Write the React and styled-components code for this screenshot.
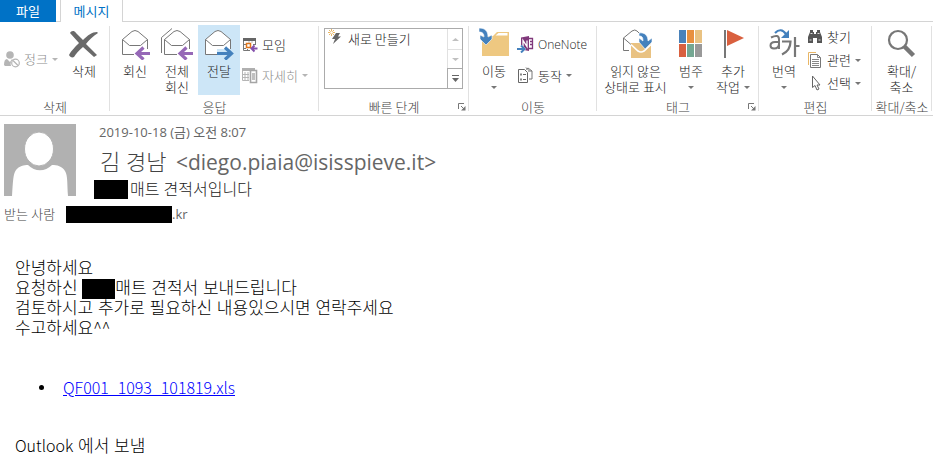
import React, { useState } from 'react';
import styled, { createGlobalStyle } from 'styled-components';

const GlobalStyle = createGlobalStyle`
  * {
    box-sizing: border-box;
  }
  body {
    margin: 0;
    background: #fff;
    font-family: 'Open Sans', 'Noto Sans CJK KR', sans-serif;
    font-size: 13px;
    color: #444;
  }
  button {
    font: inherit;
    color: inherit;
    background: none;
    border: none;
    padding: 0;
    cursor: pointer;
  }
`;

const TabBar = styled.nav`
  display: flex;
  height: 22px;
  margin-right: 5px;
`;

const FileTab = styled.button`
  && {
    width: 56px;
    background: #0072c6;
    color: #fff;
    line-height: 20px;
  }
`;

const TabGap = styled.span`
  width: 4px;
  border-bottom: 1px solid #d4d4d4;
`;

const TabFill = styled.span`
  flex: 1;
  border-bottom: 1px solid #d4d4d4;
`;

const MessageTab = styled.button`
  && {
    width: 63px;
    color: #0072c6;
    line-height: 20px;
    border: solid #d4d4d4;
    border-width: 0 1px;
  }
`;

const RibbonBar = styled.div`
  margin-right: 5px;
  border-bottom: 1px solid #d4d4d4;
  display: flex;
  font-family: 'Noto Sans CJK KR', sans-serif;
  font-weight: 300;
  color: #222;
`;

const Group = styled.section`
  flex: none;
  width: ${({ $width }) => $width}px;
  display: flex;
  flex-direction: column;
  padding-top: 3px;
  background: linear-gradient(#e1e1e1, #e1e1e1) right 0 top 4px / 1px calc(100% - 8px) no-repeat;
`;

const GroupItems = styled.div`
  flex: 1;
  display: flex;
  min-height: 70px;
  padding: 0 4px;
`;

const GroupFooter = styled.div`
  display: grid;
  grid-template-columns: ${({ $launcher }) => ($launcher ? '10px 1fr 10px' : '1fr')};
  align-items: center;
  padding: 4px 3px 0 3px;
  line-height: 16px;
  color: #444;
  white-space: nowrap;
`;

const GroupName = styled.span`
  grid-column: ${({ $launcher }) => ($launcher ? 2 : 1)};
  display: flex;
  justify-content: center;
`;

const BigButton = styled.button`
  width: ${({ $width }) => $width || 42}px;
  display: flex;
  flex-direction: column;
  align-items: center;
  gap: 3px;
  && {
    padding-top: 3px;
    background: ${({ $active }) => ($active ? '#cde6f7' : 'transparent')};
  }
  &&:hover {
    background: #cde6f7;
  }
`;

const BigLabel = styled.span`
  display: flex;
  flex-direction: column;
  align-items: center;
  line-height: 16px;
  white-space: nowrap;
`;

const LabelLine = styled.span`
  display: flex;
  align-items: center;
  justify-content: center;
  gap: 4px;
  min-height: 16px;
`;

const Caret = styled.span`
  border: solid transparent;
  border-width: 3px 3px 0;
  border-top-color: ${({ $dim }) => ($dim ? '#b5b5b5' : '#777')};
`;

const SmallColumn = styled.div`
  display: flex;
  flex-direction: column;
  align-items: flex-start;
  gap: ${({ $gap }) => $gap}px;
  padding: ${({ $top }) => $top}px 0 0 2px;
`;

const SmallButton = styled.button`
  display: flex;
  align-items: center;
  gap: 4px;
  line-height: 16px;
  white-space: nowrap;
  && {
    color: ${({ disabled }) => (disabled ? '#8c8c8c' : '#222')};
  }
`;

const JunkArea = styled.div`
  display: flex;
  align-items: center;
  width: 62px;
  padding-bottom: 2px;
`;

const Latin = styled.span`
  font-family: 'Open Sans', sans-serif;
  font-size: 12px;
`;

const Gallery = styled.div`
  flex: 1;
  display: grid;
  grid-template-columns: 1fr 15px;
  height: 61px;
  margin: 3px 2px 0 1px;
  border: 1px solid #ababab;
`;

const GalleryItem = styled.button`
  display: flex;
  align-self: start;
  align-items: center;
  gap: 6px;
  line-height: 20px;
  && {
    padding-left: 1px;
  }
`;

const GalleryScroll = styled.div`
  display: grid;
  grid-template-rows: 20px 19px 20px;
`;

const ScrollButton = styled.button`
  && {
    display: grid;
    place-items: center;
    border: solid ${({ $more }) => ($more ? '#ababab' : '#e1e1e1')};
    border-width: ${({ $first }) => ($first ? '0' : '1px')} 0 0 1px;
  }
`;

const Launcher = styled.button`
  grid-column: 3;
  display: flex;
  justify-content: flex-end;
`;

const Header = styled.header`
  padding: 8px 4px 0;
`;

const HeaderTop = styled.div`
  display: flex;
  gap: 18px;
`;

const Details = styled.div`
  flex: 1;
  display: flex;
  flex-direction: column;
`;

const Sent = styled.time`
  padding-left: 5px;
  line-height: 16px;
  color: #666;
`;

const Sender = styled.div`
  padding: 6px 0 2px 6px;
  line-height: 30px;
  font-size: 21px;
  color: #666;
`;

const SenderName = styled.span`
  margin-right: 4px;
  font-size: 22px;
  font-weight: 300;
  color: #444;
`;

const Subject = styled.h1`
  display: flex;
  align-items: center;
  gap: 2px;
  margin: 0;
  font-size: 16px;
  font-weight: 300;
  line-height: 20px;
  color: #222;
`;

const Recipient = styled.div`
  display: flex;
  align-items: center;
  margin-top: 5px;
  line-height: 20px;
  color: #666;
`;

const RecipientLabel = styled.span`
  width: 62px;
  font-weight: 300;
  color: #444;
`;

const Redacted = styled.span`
  display: inline-block;
  width: ${({ $width }) => $width}px;
  height: ${({ $height }) => $height}px;
  background: #000;
  vertical-align: top;
`;

const Body = styled.main`
  padding: 35px 15px 0;
  font-family: 'Liberation Sans', 'Noto Sans CJK KR', sans-serif;
  font-size: 17px;
  font-weight: 300;
  line-height: 20px;
  color: #000;
`;

const Line = styled.p`
  margin: 0;
`;

const Thin = styled.span`
  font-family: 'Noto Sans CJK KR', sans-serif;
  font-size: 16px;
  line-height: 1;
`;

const Attachments = styled.ul`
  list-style: none;
  margin: 38px 0 40px;
  padding: 0 0 0 24px;
`;

const Attachment = styled.li`
  display: flex;
  align-items: center;
  gap: 19px;
  &::before {
    content: '';
    width: 5px;
    height: 5px;
    border-radius: 50%;
    background: #000;
  }
`;

const FileLink = styled.a`
  font-family: 'Noto Sans CJK KR', sans-serif;
  font-size: 16px;
  color: #00f;
`;

const JunkIcon = () => (
  <svg width="16" height="17" viewBox="0 0 16 17">
    <circle cx="6" cy="4" r="3.8" fill="#b5b5b5" />
    <path d="M0 14c0-4 1-6 3-6l3 3 2-3 1 1c-2 1-3 3-2 6H1z" fill="#b5b5b5" />
    <circle cx="11.5" cy="12" r="3.8" fill="#fff" stroke="#b5b5b5" strokeWidth="1.2" />
    <path d="M9 9.500l5 5" stroke="#b5b5b5" strokeWidth="1.200" />
  </svg>
);

const DeleteIcon = () => (
  <svg width="32" height="32" viewBox="0 0 32 32">
    <path d="M2 5C3 3 6 2 8 5L15 12C20 7 24 4 29 4L30 5C25 8 21 12 18 16L29 27 26 29 15 19C11 22 8 26 6 29 4 30 2 29 1 27 3 23 8 18 11 15Z" fill="#6a6a6a" />
  </svg>
);

const Envelope = ({ x = 0 }) => (
  <g transform={`translate(${x} 0)`} fill="#fff" stroke="#777" strokeWidth="1">
    <path d="M1.500 11.500 11 3.500q3-2 6 0L26.500 11.500V26.500H1.500z" />
    <path d="M1.500 11.500 8.500 17.500H19.500L26.500 11.500" fill="none" />
  </g>
);

const ReplyIcon = () => (
  <svg width="32" height="32" viewBox="0 0 32 32">
    <Envelope x={2} />
    <path d="M15 21h17v8H15z" fill="#fff" />
    <path d="M31 25.500H18M24.500 19.500l-6.500 6 6.500 6" fill="none" stroke="#9668b7" strokeWidth="3.200" />
  </svg>
);

const ReplyAllIcon = () => (
  <svg width="34" height="32" viewBox="0 0 34 32">
    <path d="M1.500 25V9.500L12 .5" fill="none" stroke="#777" />
    <Envelope x={3} />
    <path d="M17 21h17v8H17z" fill="#fff" />
    <path d="M33 25.500H20M26.500 19.500l-6.500 6 6.500 6" fill="none" stroke="#9668b7" strokeWidth="3.200" />
  </svg>
);

const ForwardIcon = () => (
  <svg width="32" height="32" viewBox="0 0 32 32">
    <Envelope x={1} />
    <path d="M14 21h15v8H14z" fill="#cde6f7" />
    <path d="M14 25.500H28M22 19.500l6.500 6-6.500 6" fill="none" stroke="#4481bd" strokeWidth="3.200" />
  </svg>
);

const MeetingIcon = () => (
  <svg width="16" height="16" viewBox="0 0 16 16">
    <path d="M1 1h13v3H1z" fill="#666" />
    <path d="M1.500 4v9.500H8M13.500 4v4M4 6.500h1M7 4.500v1M10 4.500v1M2 7.500h2M2 11.500h2M5.500 13v-1M11 7.500h2" fill="none" stroke="#777" />
    <path d="M4.500 6.500h4v4h-4z" fill="#fff" stroke="#e0761c" strokeWidth="1.500" />
    <path d="M15.500 11.500H10M12.500 8.500l-3 3 3 3" fill="none" stroke="#8450ac" strokeWidth="2" />
  </svg>
);

const MoreIcon = () => (
  <svg width="16" height="17" viewBox="0 0 16 17">
    <path d="M0 1h13v3H0z" fill="#b0b0b0" />
    <path d="M.5 4v9.500H7M3 5v8M6 5v8M1 7.500h6M1 10.500h6" fill="none" stroke="#b5b5b5" />
    <path d="M8.500 3.500h6v12h-6z" fill="#fff" stroke="#a5a5a5" strokeWidth="1.600" />
    <path d="M10 6h3v7h-3z" fill="#c0c0c0" />
  </svg>
);

const QuickStepIcon = () => (
  <svg width="16" height="20" viewBox="0 0 16 20">
    <path d="M5.500 0v7M2 3.500h7M3 1l5 5M8 1 3 6" stroke="#e9b665" strokeWidth="1" />
    <circle cx="5.500" cy="3.500" r="1.300" fill="#fff" />
    <path d="M10 4h4l-2 3.500h3L7 15l2-5H6z" fill="#666" />
  </svg>
);

const LauncherIcon = () => (
  <svg width="8" height="8" viewBox="0 0 8 8">
    <path d="M.5 6V.5H6M3 3l3 3" fill="none" stroke="#777" />
    <path d="M7.500 3v4.500H3z" fill="#777" />
  </svg>
);

const MoveIcon = () => (
  <svg width="32" height="32" viewBox="0 0 32 32">
    <path d="M4 28V8h11l4-4h12v24z" fill="#eec881" />
    <path d="M17.500 7.500 20.500 5h9v2.500z" fill="#fff" />
    <path d="M1 0c6 0 9 3 9 9l4-2v4l-6 6-6-6V7l4 2C6 6 5 4 1 4z" fill="#4481bd" stroke="#fff" strokeWidth=".6" />
  </svg>
);

const OneNoteIcon = () => (
  <svg width="17" height="17" viewBox="0 0 17 17">
    <path d="M10 2.500h5.500v10H10M13 5.500h2M13 8.500h2" fill="none" stroke="#80397b" strokeWidth="1.300" />
    <path d="M4 1.500 12 0v15l-8-1.500z" fill="#80397b" />
    <path d="M6 10.500v-6l4 6v-6" fill="none" stroke="#fff" strokeWidth="1.300" />
    <path d="M0 9h5l4 4-4 4H0z" fill="#fff" />
    <path d="M0 13h7M4 9.500 7.500 13 4 16.500" fill="none" stroke="#4481bd" strokeWidth="2" />
  </svg>
);

const ActionsIcon = () => (
  <svg width="17" height="17" viewBox="0 0 17 17">
    <path d="M1.500 2.500h6l3 3v10h-9z" fill="#fff" stroke="#666" />
    <path d="M3 6.500h2v2H3zM3 11.500h2v2H3z" fill="#888" />
    <path d="M6 7.500h3M6 12.500h3" stroke="#666" />
    <path d="M9 2.500 11 1l4 3v8h-3M9 .5l3 3M15 4h-4" fill="none" stroke="#777" />
  </svg>
);

const UnreadIcon = () => (
  <svg width="32" height="32" viewBox="0 0 32 32">
    <path d="M9 22.500H3.500V10L12 3q3-2 5 0l3 3" fill="none" stroke="#777" />
    <path d="M3.500 10 11 16.500" fill="none" stroke="#777" />
    <path d="M11 15h20v15H11z" fill="#e9c282" />
    <path d="M11 16.500 18 23q3 2 6 0l7-6.500" fill="none" stroke="#fff" strokeWidth="1.600" />
    <path d="M19 5c6-1 9 3 9 8l4-3v4l-7 7-6-7v-4l4 3c0-4-1-5-4-5z" fill="#4481bd" stroke="#fff" strokeWidth=".6" />
  </svg>
);

const CategoryIcon = () => (
  <svg width="24" height="32" viewBox="0 0 24 32">
    <path d="M0 2h7v13H0z" fill="#4a82ba" />
    <path d="M8 2h7v13H8z" fill="#e8903f" />
    <path d="M16 2h7v13h-7z" fill="#e9c282" />
    <path d="M0 16h7v13H0z" fill="#d9603f" />
    <path d="M8 16h7v13H8z" fill="#74a792" />
    <path d="M16 16h7v13h-7z" fill="#999" />
  </svg>
);

const FlagIcon = () => (
  <svg width="22" height="32" viewBox="0 0 22 32">
    <path d="M2 2h2v28H2z" fill="#777" />
    <path d="M5 2l17 8L5 18z" fill="#d9603f" />
  </svg>
);

const TranslateIcon = () => (
  <svg width="32" height="32" viewBox="0 0 32 32">
    <path d="M3 9.500q8-4 8 2V21M11 14H7q-4.500 0-4.500 3.500 0 3 3.500 3 5 0 5-5" fill="none" stroke="#777" strokeWidth="2" />
    <path d="M14 13.500h8.500q0 9-8.500 13M27 9v20M27.500 18h4" fill="none" stroke="#777" strokeWidth="2.200" />
    <path d="M7 5q6-6 11 1" fill="none" stroke="#4481bd" strokeWidth="2.200" />
    <path d="M21 2v8h-8z" fill="#4481bd" />
  </svg>
);

const FindIcon = () => (
  <svg width="16" height="16" viewBox="0 0 16 16">
    <path d="M3 1h3v2h1v2h2V3h1V1h3v2l2 5v6h-5V9H6v5H1V8l2-5z" fill="#555" />
    <path d="M2.500 11h2M11.500 11h2M3.500 4.500h2M10.500 4.500h2" stroke="#fff" strokeWidth=".8" />
  </svg>
);

const RelatedIcon = () => (
  <svg width="16" height="16" viewBox="0 0 16 16">
    <path d="M1.500 13V.5H9" fill="none" stroke="#e9b665" />
    <path d="M3.500 2.500h7l3 3v10h-10z" fill="#fff" stroke="#777" />
    <path d="M10.500 2.500v3h3M5 7.500h7M5 9.500h7M5 11.500h7M5 13.500h7" fill="none" stroke="#888" />
  </svg>
);

const SelectIcon = () => (
  <svg width="16" height="16" viewBox="0 0 16 16">
    <path d="M5.500 1v11.500l2.500-2 2 4.500 2-1-2-4h3z" fill="#fff" stroke="#666" />
  </svg>
);

const ZoomIcon = () => (
  <svg width="32" height="32" viewBox="0 0 32 32">
    <circle cx="12" cy="12" r="9" fill="#fff" stroke="#777" strokeWidth="2.200" />
    <path d="M18 18l9.500 9.500" stroke="#777" strokeWidth="4.500" />
  </svg>
);

const PersonPicture = () => (
  <svg width="72" height="72" viewBox="0 0 72 72" role="img" aria-label="보낸 사람">
    <path d="M0 0h72v72H0z" fill="#b1b1b1" />
    <path d="M8 72C9 58 9 50 12 46 15 42 20 41 24 41 31 48 41 48 48 41 53 41 58 42 61 47 64 52 63 60 64 72z" fill="#fff" />
    <ellipse cx="35" cy="25" rx="14.500" ry="17" fill="#fff" stroke="#b1b1b1" strokeWidth="1" />
  </svg>
);

const Big = ({ icon, lines, caret, ...rest }) => (
  <BigButton {...rest}>
    {icon}
    <BigLabel>
      {lines.map((text, i) => (
        <LabelLine key={text}>
          {text}
          {caret === 'inline' && i === lines.length - 1 && <Caret />}
        </LabelLine>
      ))}
      {caret === 'below' && <LabelLine><Caret /></LabelLine>}
    </BigLabel>
  </BigButton>
);

const Small = ({ icon, children, caret, disabled }) => (
  <SmallButton disabled={disabled}>
    {icon}
    {children}
    {caret && <Caret $dim={disabled} />}
  </SmallButton>
);

const RibbonGroup = ({ name, width, launcher, children }) => (
  <Group $width={width} aria-label={name}>
    <GroupItems>{children}</GroupItems>
    <GroupFooter $launcher={launcher}>
      <GroupName $launcher={launcher}>{name}</GroupName>
      {launcher && <Launcher aria-label={`${name} 옵션`}><LauncherIcon /></Launcher>}
    </GroupFooter>
  </Group>
);

const ScrollGlyph = ({ d, color }) => (
  <svg width="7" height="7" viewBox="0 0 7 7">
    <path d={d} fill={color} />
  </svg>
);

const Ribbon = () => {
  const [active, setActive] = useState('forward');

  return (
    <RibbonBar>
      <RibbonGroup name="삭제" width={110}>
        <JunkArea>
          <Small icon={<JunkIcon />} caret disabled>정크</Small>
        </JunkArea>
        <Big icon={<DeleteIcon />} lines={['삭제']} $width={36} />
      </RibbonGroup>
      <RibbonGroup name="응답" width={209}>
        <Big icon={<ReplyIcon />} lines={['회신']} $active={active === 'reply'} onClick={() => setActive('reply')} />
        <Big icon={<ReplyAllIcon />} lines={['전체', '회신']} $active={active === 'replyAll'} onClick={() => setActive('replyAll')} />
        <Big icon={<ForwardIcon />} lines={['전달']} $active={active === 'forward'} onClick={() => setActive('forward')} />
        <SmallColumn $top={12} $gap={14}>
          <Small icon={<MeetingIcon />}>모임</Small>
          <Small icon={<MoreIcon />} caret disabled>자세히</Small>
        </SmallColumn>
      </RibbonGroup>
      <RibbonGroup name="빠른 단계" width={150} launcher>
        <Gallery>
          <GalleryItem><QuickStepIcon />새로 만들기</GalleryItem>
          <GalleryScroll>
            <ScrollButton $first aria-label="위로"><ScrollGlyph d="M0 5l3.500-3L7 5z" color="#c0c0c0" /></ScrollButton>
            <ScrollButton aria-label="아래로"><ScrollGlyph d="M0 2h7L3.500 5z" color="#c0c0c0" /></ScrollButton>
            <ScrollButton $more aria-label="더 보기"><ScrollGlyph d="M0 0h7v1H0zM0 3h7L3.500 7z" color="#666" /></ScrollButton>
          </GalleryScroll>
        </Gallery>
      </RibbonGroup>
      <RibbonGroup name="이동" width={128}>
        <Big icon={<MoveIcon />} lines={['이동']} caret="below" />
        <SmallColumn $top={11} $gap={14}>
          <Small icon={<OneNoteIcon />}><Latin>OneNote</Latin></Small>
          <Small icon={<ActionsIcon />} caret>동작</Small>
        </SmallColumn>
      </RibbonGroup>
      <RibbonGroup name="태그" width={162} launcher>
        <Big icon={<UnreadIcon />} lines={['읽지 않은', '상태로 표시']} $width={69} />
        <Big icon={<CategoryIcon />} lines={['범주']} caret="below" />
        <Big icon={<FlagIcon />} lines={['추가', '작업']} caret="inline" />
      </RibbonGroup>
      <RibbonGroup name="편집" width={113}>
        <Big icon={<TranslateIcon />} lines={['번역']} caret="below" />
        <SmallColumn $top={4} $gap={7}>
          <Small icon={<FindIcon />}>찾기</Small>
          <Small icon={<RelatedIcon />} caret>관련</Small>
          <Small icon={<SelectIcon />} caret>선택</Small>
        </SmallColumn>
      </RibbonGroup>
      <RibbonGroup name="확대/축소" width={60}>
        <Big icon={<ZoomIcon />} lines={['확대/', '축소']} $width={51} />
      </RibbonGroup>
    </RibbonBar>
  );
};

const App = () => (
  <>
    <GlobalStyle />
    <TabBar>
      <FileTab>파일</FileTab>
      <TabGap />
      <MessageTab>메시지</MessageTab>
      <TabFill />
    </TabBar>
    <Ribbon />
    <Header>
      <HeaderTop>
        <PersonPicture />
        <Details>
          <Sent>2019-10-18 (금) 오전 8:07</Sent>
          <Sender><SenderName>김 경남</SenderName> &lt;diego.piaia@isisspieve.it&gt;</Sender>
          <Subject><Redacted $width={34} $height={19} />매트 견적서입니다</Subject>
        </Details>
      </HeaderTop>
      <Recipient>
        <RecipientLabel>받는 사람</RecipientLabel>
        <Redacted $width={106} $height={17} />
        .kr
      </Recipient>
    </Header>
    <Body>
      <Line>안녕하세요</Line>
      <Line>요청하신 <Redacted $width={33} $height={20} />매트 견적서 보내드립니다</Line>
      <Line>검토하시고 추가로 필요하신 내용있으시면 연락주세요</Line>
      <Line>수고하세요<Thin>^^</Thin></Line>
      <Attachments>
        <Attachment><FileLink href="#QF001_1093_101819.xls">QF001_1093_101819.xls</FileLink></Attachment>
      </Attachments>
      <Line><Thin>Outlook</Thin> 에서 보냄</Line>
    </Body>
  </>
);

export default App;
